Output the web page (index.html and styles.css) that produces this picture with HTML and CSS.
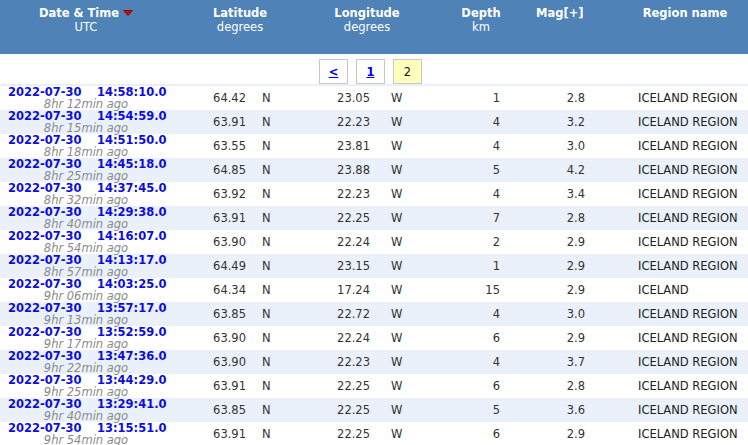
FILE: index.html
```html
<!DOCTYPE html>
<html>
<head>
<meta charset="utf-8">
<link rel="stylesheet" href="styles.css">
</head>
<body>
<table class="quakes">
  <colgroup>
    <col class="c-date"><col class="c-latv"><col class="c-latd"><col class="c-lonv"><col class="c-lond"><col class="c-dep"><col class="c-mag"><col class="c-reg">
  </colgroup>
  <thead>
    <tr class="head">
      <th class="h-date">Date &amp; Time <svg class="sort" width="10" height="6" viewBox="0 0 10 6"><polygon points="0.5,0.5 9.5,0.5 5,5.5" fill="#d00000" stroke="#8a0000" stroke-width="0.8"/></svg><br><span class="sub">UTC</span></th>
      <th colspan="2">Latitude<br><span class="sub">degrees</span></th>
      <th colspan="2">Longitude<br><span class="sub">degrees</span></th>
      <th>Depth<br><span class="sub">km</span></th>
      <th class="h-mag">Mag[+]</th>
      <th class="h-reg">Region name</th>
    </tr>
  </thead>
  <tbody>
    <tr class="pager-row">
      <td colspan="8">
        <div class="pager">
          <a class="pg" href="#">&lt;</a>
          <a class="pg" href="#">1</a>
          <span class="pg cur">2</span>
        </div>
      </td>
    </tr>
    <tr class="band"><td colspan="8"></td></tr>
    <tr class="row"><td class="date"><div class="dt"><span class="d">2022-07-30</span>14:58:10.0</div><div class="ago">8hr 12min ago</div></td><td class="num">64.42</td><td class="dir">N</td><td class="num">23.05</td><td class="dir2">W</td><td class="dep">1</td><td class="mag">2.8</td><td class="reg">ICELAND REGION</td></tr>
    <tr class="row alt"><td class="date"><div class="dt"><span class="d">2022-07-30</span>14:54:59.0</div><div class="ago">8hr 15min ago</div></td><td class="num">63.91</td><td class="dir">N</td><td class="num">22.23</td><td class="dir2">W</td><td class="dep">4</td><td class="mag">3.2</td><td class="reg">ICELAND REGION</td></tr>
    <tr class="row"><td class="date"><div class="dt"><span class="d">2022-07-30</span>14:51:50.0</div><div class="ago">8hr 18min ago</div></td><td class="num">63.55</td><td class="dir">N</td><td class="num">23.81</td><td class="dir2">W</td><td class="dep">4</td><td class="mag">3.0</td><td class="reg">ICELAND REGION</td></tr>
    <tr class="row alt"><td class="date"><div class="dt"><span class="d">2022-07-30</span>14:45:18.0</div><div class="ago">8hr 25min ago</div></td><td class="num">64.85</td><td class="dir">N</td><td class="num">23.88</td><td class="dir2">W</td><td class="dep">5</td><td class="mag">4.2</td><td class="reg">ICELAND REGION</td></tr>
    <tr class="row"><td class="date"><div class="dt"><span class="d">2022-07-30</span>14:37:45.0</div><div class="ago">8hr 32min ago</div></td><td class="num">63.92</td><td class="dir">N</td><td class="num">22.23</td><td class="dir2">W</td><td class="dep">4</td><td class="mag">3.4</td><td class="reg">ICELAND REGION</td></tr>
    <tr class="row alt"><td class="date"><div class="dt"><span class="d">2022-07-30</span>14:29:38.0</div><div class="ago">8hr 40min ago</div></td><td class="num">63.91</td><td class="dir">N</td><td class="num">22.25</td><td class="dir2">W</td><td class="dep">7</td><td class="mag">2.8</td><td class="reg">ICELAND REGION</td></tr>
    <tr class="row"><td class="date"><div class="dt"><span class="d">2022-07-30</span>14:16:07.0</div><div class="ago">8hr 54min ago</div></td><td class="num">63.90</td><td class="dir">N</td><td class="num">22.24</td><td class="dir2">W</td><td class="dep">2</td><td class="mag">2.9</td><td class="reg">ICELAND REGION</td></tr>
    <tr class="row alt"><td class="date"><div class="dt"><span class="d">2022-07-30</span>14:13:17.0</div><div class="ago">8hr 57min ago</div></td><td class="num">64.49</td><td class="dir">N</td><td class="num">23.15</td><td class="dir2">W</td><td class="dep">1</td><td class="mag">2.9</td><td class="reg">ICELAND REGION</td></tr>
    <tr class="row"><td class="date"><div class="dt"><span class="d">2022-07-30</span>14:03:25.0</div><div class="ago">9hr 06min ago</div></td><td class="num">64.34</td><td class="dir">N</td><td class="num">17.24</td><td class="dir2">W</td><td class="dep">15</td><td class="mag">2.9</td><td class="reg">ICELAND</td></tr>
    <tr class="row alt"><td class="date"><div class="dt"><span class="d">2022-07-30</span>13:57:17.0</div><div class="ago">9hr 13min ago</div></td><td class="num">63.85</td><td class="dir">N</td><td class="num">22.72</td><td class="dir2">W</td><td class="dep">4</td><td class="mag">3.0</td><td class="reg">ICELAND REGION</td></tr>
    <tr class="row"><td class="date"><div class="dt"><span class="d">2022-07-30</span>13:52:59.0</div><div class="ago">9hr 17min ago</div></td><td class="num">63.90</td><td class="dir">N</td><td class="num">22.24</td><td class="dir2">W</td><td class="dep">6</td><td class="mag">2.9</td><td class="reg">ICELAND REGION</td></tr>
    <tr class="row alt"><td class="date"><div class="dt"><span class="d">2022-07-30</span>13:47:36.0</div><div class="ago">9hr 22min ago</div></td><td class="num">63.90</td><td class="dir">N</td><td class="num">22.23</td><td class="dir2">W</td><td class="dep">4</td><td class="mag">3.7</td><td class="reg">ICELAND REGION</td></tr>
    <tr class="row"><td class="date"><div class="dt"><span class="d">2022-07-30</span>13:44:29.0</div><div class="ago">9hr 25min ago</div></td><td class="num">63.91</td><td class="dir">N</td><td class="num">22.25</td><td class="dir2">W</td><td class="dep">6</td><td class="mag">2.8</td><td class="reg">ICELAND REGION</td></tr>
    <tr class="row alt"><td class="date"><div class="dt"><span class="d">2022-07-30</span>13:29:41.0</div><div class="ago">9hr 40min ago</div></td><td class="num">63.85</td><td class="dir">N</td><td class="num">22.25</td><td class="dir2">W</td><td class="dep">5</td><td class="mag">3.6</td><td class="reg">ICELAND REGION</td></tr>
    <tr class="row"><td class="date"><div class="dt"><span class="d">2022-07-30</span>13:15:51.0</div><div class="ago">9hr 54min ago</div></td><td class="num">63.91</td><td class="dir">N</td><td class="num">22.25</td><td class="dir2">W</td><td class="dep">6</td><td class="mag">2.9</td><td class="reg">ICELAND REGION</td></tr>
  </tbody>
</table>
</body>
</html>
```
FILE: styles.css
```css
html, body {
  margin: 0;
  padding: 0;
  background: #ffffff;
}
body {
  font-family: "DejaVu Sans", Verdana, sans-serif;
  font-size: 11.5px;
  color: #333333;
  overflow: hidden;
}
.quakes {
  width: 748px;
  table-layout: fixed;
  border-collapse: collapse;
  border-spacing: 0;
}
.c-date { width: 172px; }
.c-latv { width: 78px; }
.c-latd { width: 58px; }
.c-lonv { width: 66px; }
.c-lond { width: 52px; }
.c-dep { width: 110px; }
.c-mag { width: 74px; }
.c-reg { width: 138px; }

.quakes td, .quakes th {
  padding: 0;
  white-space: nowrap;
}
.head th {
  background: #4f82b6;
  color: #ffffff;
  font-weight: bold;
  height: 54px;
  vertical-align: top;
  text-align: center;
  padding-top: 6px;
  line-height: 14px;
  box-sizing: border-box;
}
.head .sub {
  font-weight: normal;
}
.head .sort {
  vertical-align: 1px;
}
.head .h-mag {
  padding-right: 28px;
}
.head .h-reg {
  padding-left: 12px;
}

.pager-row td {
  height: 30px;
  padding: 0;
}
.pager {
  display: flex;
  justify-content: center;
  gap: 8px;
  padding: 5px 7px 0 0;
  height: 30px;
  box-sizing: border-box;
}
.pg {
  display: flex;
  align-items: center;
  justify-content: center;
  width: 29px;
  height: 25px;
  box-sizing: border-box;
  border: 1px solid #c8c8c8;
  background: #ffffff;
  color: #0000ee;
  font-weight: bold;
  text-decoration: underline;
}
.pg.cur {
  background: #ffffbb;
  color: #111111;
  font-weight: normal;
  text-decoration: none;
}
.band td {
  height: 2px;
  line-height: 0;
  font-size: 0;
  background: #eaf0fa;
}

.row td {
  height: 24px;
  vertical-align: middle;
}
.row.alt td {
  background: #eaf1fb;
}
.date {
  line-height: 12px;
  text-align: center;
}
.dt {
  text-align: left;
  padding-left: 8px;
  font-weight: bold;
  color: #0c0ce0;
}
.dt .d {
  display: inline-block;
  width: 89px;
}
.ago {
  font-style: italic;
  color: #8a8a8a;
}
.row .num {
  text-align: right;
  padding-right: 4px;
}
.row .dir {
  padding-left: 12px;
}
.row .dir2 {
  padding-left: 17px;
}
.row .dep {
  text-align: right;
  padding-right: 36px;
}
.row .mag {
  text-align: right;
  padding-right: 25px;
}
.row .reg {
  padding-left: 28px;
  color: #222222;
}
```
